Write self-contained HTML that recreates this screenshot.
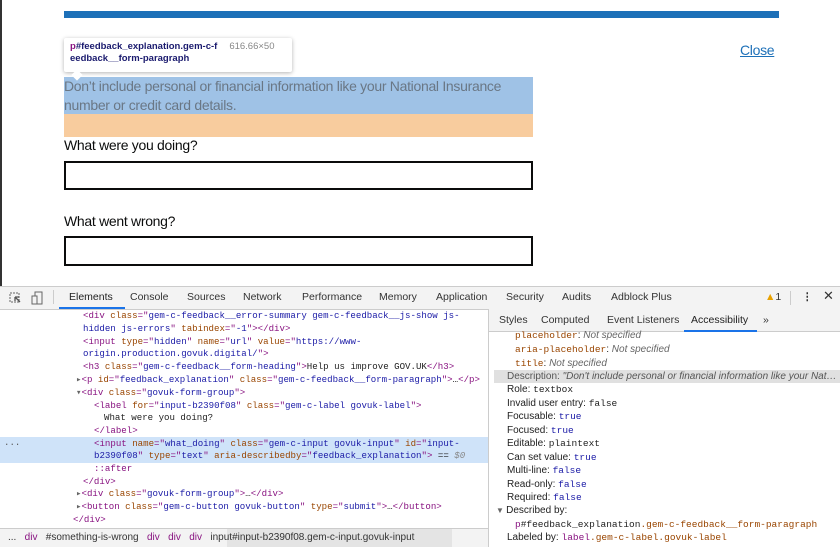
<!DOCTYPE html>
<html><head><meta charset="utf-8"><style>
*{margin:0;padding:0;box-sizing:border-box}
body{width:840px;height:547px;overflow:hidden;background:#fff;position:relative;font-family:"Liberation Sans",sans-serif}
.a{position:absolute}
.mono{font-family:"Liberation Mono",monospace;font-size:9.1px;white-space:pre}
.tag{color:#881280}.at{color:#994500}.av{color:#1a1aa6}.tx{color:#222}
.ln{position:absolute;height:12.8px;line-height:12.8px}
.tab{position:absolute;top:291px;font-size:10.5px;color:#333}
.rt{position:absolute;font-size:10.5px;color:#333;top:314px}
.r{position:absolute;left:507px;font-size:10px;color:#222;line-height:13.5px;height:13.5px;white-space:pre}
.kw{font-family:"Liberation Mono",monospace;font-size:9.5px;color:#1a1aa6}
.g{letter-spacing:-0.3px}
</style></head><body>
<div class="a" style="left:0;top:0;width:2px;height:286px;background:#333"></div>
<div class="a" style="left:64px;top:11px;width:715px;height:7px;background:#1d70b8"></div>
<div class="a" style="left:64px;top:77px;width:469px;height:37px;background:#9fc2e6"></div>
<div class="a" style="left:64px;top:114px;width:469px;height:23px;background:#f8cc9e"></div>
<div class="a g" style="left:64px;top:77px;font-size:14px;line-height:18.5px;color:#6a7785;width:480px">Don’t include personal or financial information like your National Insurance number or credit card details.</div>
<div class="a" style="left:64px;top:38px;width:228px;height:34px;background:#fff;box-shadow:0 1px 4px rgba(0,0,0,.3);border-radius:2px;font-size:9.5px;line-height:12px;padding:3px 6px;font-weight:bold;color:#1a1a6e"><span style="color:#881280">p</span>#feedback_explanation.gem-c-f<span style="font-weight:normal;color:#888;margin-left:12px">616.66×50</span><br>eedback__form-paragraph</div>
<div class="a" style="left:73px;top:71px;width:8px;height:8px;background:#fff;transform:rotate(45deg)"></div>
<div class="a g" style="left:740px;top:42px;font-size:14px;color:#1d70b8;text-decoration:underline">Close</div>
<div class="a g" style="left:64px;top:137px;font-size:14px;color:#0b0c0c">What were you doing?</div>
<div class="a" style="left:64px;top:161px;width:469px;height:29px;border:2px solid #0b0c0c"></div>
<div class="a g" style="left:64px;top:213px;font-size:14px;color:#0b0c0c">What went wrong?</div>
<div class="a" style="left:64px;top:236px;width:469px;height:30px;border:2px solid #0b0c0c"></div>

<div class="a" style="left:0;top:286px;width:840px;height:24px;background:#f3f3f3;border-top:1px solid #ccc;border-bottom:1px solid #ccc"></div>
<svg class="a" style="left:9px;top:291px" width="34" height="14"><rect x="1" y="2" width="9" height="9" fill="none" stroke="#666" stroke-dasharray="2 1"/><path d="M6 6l5 5M6 6v4M6 6h4" stroke="#555" stroke-width="1.3" fill="none"/><rect x="26" y="1" width="7" height="12" fill="none" stroke="#666"/><rect x="23" y="5" width="5" height="8" fill="#f3f3f3" stroke="#666"/></svg>
<div class="a" style="left:53px;top:290px;width:1px;height:14px;background:#ccc"></div>
<div class="tab" style="left:69px;color:#222">Elements</div>
<div class="a" style="left:59px;top:307px;width:66px;height:2px;background:#1a73e8"></div>
<div class="tab" style="left:130px">Console</div>
<div class="tab" style="left:187px">Sources</div>
<div class="tab" style="left:243px">Network</div>
<div class="tab" style="left:302px">Performance</div>
<div class="tab" style="left:379px">Memory</div>
<div class="tab" style="left:436px">Application</div>
<div class="tab" style="left:506px">Security</div>
<div class="tab" style="left:562px">Audits</div>
<div class="tab" style="left:611px">Adblock Plus</div>
<div class="tab" style="left:765px;color:#e8a100">▲<span style="color:#333">1</span></div>
<div class="a" style="left:790px;top:291px;width:1px;height:14px;background:#ccc"></div>
<div class="tab" style="left:802px;font-weight:bold">⋮</div>
<div class="tab" style="left:823px;font-size:13px;top:288px">✕</div>

<div class="a" style="left:488px;top:309px;width:1px;height:238px;background:#ccc"></div>
<div class="a" style="left:489px;top:309px;width:351px;height:23px;background:#f3f3f3;border-bottom:1px solid #ccc"></div>
<div class="rt" style="left:499px">Styles</div>
<div class="rt" style="left:541px">Computed</div>
<div class="rt" style="left:607px">Event Listeners</div>
<div class="rt" style="left:691px;color:#222">Accessibility</div>
<div class="a" style="left:684px;top:330px;width:73px;height:2px;background:#1a73e8"></div>
<div class="rt" style="left:763px">»</div>

<div class="a" style="left:0;top:437px;width:488px;height:26px;background:#cfe3f9"></div>
<div class="a mono" style="left:4px;top:437px;color:#555">...</div>
<div class="mono">
<div class="ln" style="left:83px;top:310px"><span class="tag">&lt;div </span><span class="at">class</span><span class="tag">="</span><span class="av">gem-c-feedback__error-summary gem-c-feedback__js-show js-</span></div>
<div class="ln" style="left:83px;top:323px"><span class="av">hidden js-errors</span><span class="tag">" </span><span class="at">tabindex</span><span class="tag">="</span><span class="av">-1</span><span class="tag">"&gt;&lt;/div&gt;</span></div>
<div class="ln" style="left:83px;top:336px"><span class="tag">&lt;input </span><span class="at">type</span><span class="tag">="</span><span class="av">hidden</span><span class="tag">" </span><span class="at">name</span><span class="tag">="</span><span class="av">url</span><span class="tag">" </span><span class="at">value</span><span class="tag">="</span><span class="av">https://www-</span></div>
<div class="ln" style="left:83px;top:348px"><span class="av">origin.production.govuk.digital/</span><span class="tag">"&gt;</span></div>
<div class="ln" style="left:83px;top:361px"><span class="tag">&lt;h3 </span><span class="at">class</span><span class="tag">="</span><span class="av">gem-c-feedback__form-heading</span><span class="tag">"&gt;</span><span class="tx">Help us improve GOV.UK</span><span class="tag">&lt;/h3&gt;</span></div>
<div class="ln" style="left:76px;top:374px"><span style="color:#666">▸</span><span class="tag">&lt;p </span><span class="at">id</span><span class="tag">="</span><span class="av">feedback_explanation</span><span class="tag">" </span><span class="at">class</span><span class="tag">="</span><span class="av">gem-c-feedback__form-paragraph</span><span class="tag">"&gt;</span><span class="tx">…</span><span class="tag">&lt;/p&gt;</span></div>
<div class="ln" style="left:76px;top:387px"><span style="color:#666">▾</span><span class="tag">&lt;div </span><span class="at">class</span><span class="tag">="</span><span class="av">govuk-form-group</span><span class="tag">"&gt;</span></div>
<div class="ln" style="left:94px;top:400px"><span class="tag">&lt;label </span><span class="at">for</span><span class="tag">="</span><span class="av">input-b2390f08</span><span class="tag">" </span><span class="at">class</span><span class="tag">="</span><span class="av">gem-c-label govuk-label</span><span class="tag">"&gt;</span></div>
<div class="ln" style="left:104px;top:412px"><span class="tx">What were you doing?</span></div>
<div class="ln" style="left:94px;top:425px"><span class="tag">&lt;/label&gt;</span></div>
<div class="ln" style="left:94px;top:438px"><span class="tag">&lt;input </span><span class="at">name</span><span class="tag">="</span><span class="av">what_doing</span><span class="tag">" </span><span class="at">class</span><span class="tag">="</span><span class="av">gem-c-input govuk-input</span><span class="tag">" </span><span class="at">id</span><span class="tag">="</span><span class="av">input-</span></div>
<div class="ln" style="left:94px;top:450px"><span class="av">b2390f08</span><span class="tag">" </span><span class="at">type</span><span class="tag">="</span><span class="av">text</span><span class="tag">" </span><span class="at">aria-describedby</span><span class="tag">="</span><span class="av">feedback_explanation</span><span class="tag">"&gt;</span><span class="tx"> == </span><i style="color:#888">$0</i></div>
<div class="ln" style="left:94px;top:463px"><span class="tag">::after</span></div>
<div class="ln" style="left:83px;top:476px"><span class="tag">&lt;/div&gt;</span></div>
<div class="ln" style="left:76px;top:488px"><span style="color:#666">▸</span><span class="tag">&lt;div </span><span class="at">class</span><span class="tag">="</span><span class="av">govuk-form-group</span><span class="tag">"&gt;</span><span class="tx">…</span><span class="tag">&lt;/div&gt;</span></div>
<div class="ln" style="left:76px;top:501px"><span style="color:#666">▸</span><span class="tag">&lt;button </span><span class="at">class</span><span class="tag">="</span><span class="av">gem-c-button govuk-button</span><span class="tag">" </span><span class="at">type</span><span class="tag">="</span><span class="av">submit</span><span class="tag">"&gt;</span><span class="tx">…</span><span class="tag">&lt;/button&gt;</span></div>
<div class="ln" style="left:73px;top:514px"><span class="tag">&lt;/div&gt;</span></div>
</div>
<div class="a" style="left:0;top:528px;width:488px;height:19px;background:#f3f3f3;border-top:1px solid #ccc"></div>
<div class="a" style="left:227px;top:529px;width:225px;height:18px;background:#e4e4e4"></div>
<div class="a" style="left:8px;top:532px;font-size:10px;color:#333;white-space:pre">...   <span style="color:#881280">div</span>   #something-is-wrong   <span style="color:#881280">div</span>   <span style="color:#881280">div</span>   <span style="color:#881280">div</span>   input#input-b2390f08.gem-c-input.govuk-input</div>

<div class="a" style="left:494px;top:370px;width:346px;height:13px;background:#e0e0e0"></div>
<div class="r" style="left:515px;top:329px"><span class="kw" style="color:#994500">placeholder</span>: <i style="color:#666">Not specified</i></div>
<div class="r" style="left:515px;top:343px"><span class="kw" style="color:#994500">aria-placeholder</span>: <i style="color:#666">Not specified</i></div>
<div class="r" style="left:515px;top:357px"><span class="kw" style="color:#994500">title</span>: <i style="color:#666">Not specified</i></div>
<div class="r" style="top:370px;color:#555">Description: <i>"Don't include personal or financial information like your Nat…</i></div>
<div class="r" style="top:383px">Role: <span class="kw" style="color:#222">textbox</span></div>
<div class="r" style="top:397px">Invalid user entry: <span class="kw" style="color:#222">false</span></div>
<div class="r" style="top:410px">Focusable: <span class="kw">true</span></div>
<div class="r" style="top:424px">Focused: <span class="kw">true</span></div>
<div class="r" style="top:437px">Editable: <span class="kw" style="color:#222">plaintext</span></div>
<div class="r" style="top:451px">Can set value: <span class="kw">true</span></div>
<div class="r" style="top:464px">Multi-line: <span class="kw">false</span></div>
<div class="r" style="top:478px">Read-only: <span class="kw">false</span></div>
<div class="r" style="top:491px">Required: <span class="kw">false</span></div>
<div class="r" style="left:496px;top:504px"><span style="color:#666;font-size:8px">▼ </span>Described by:</div>
<div class="r" style="left:515px;top:518px"><span class="kw" style="color:#881280">p</span><span class="kw" style="color:#222">#feedback_explanation</span><span class="kw" style="color:#994500">.gem-c-feedback__form-paragraph</span></div>
<div class="r" style="top:531px">Labeled by: <span class="kw" style="color:#881280">label</span><span class="kw" style="color:#994500">.gem-c-label.govuk-label</span></div>
</body></html>
